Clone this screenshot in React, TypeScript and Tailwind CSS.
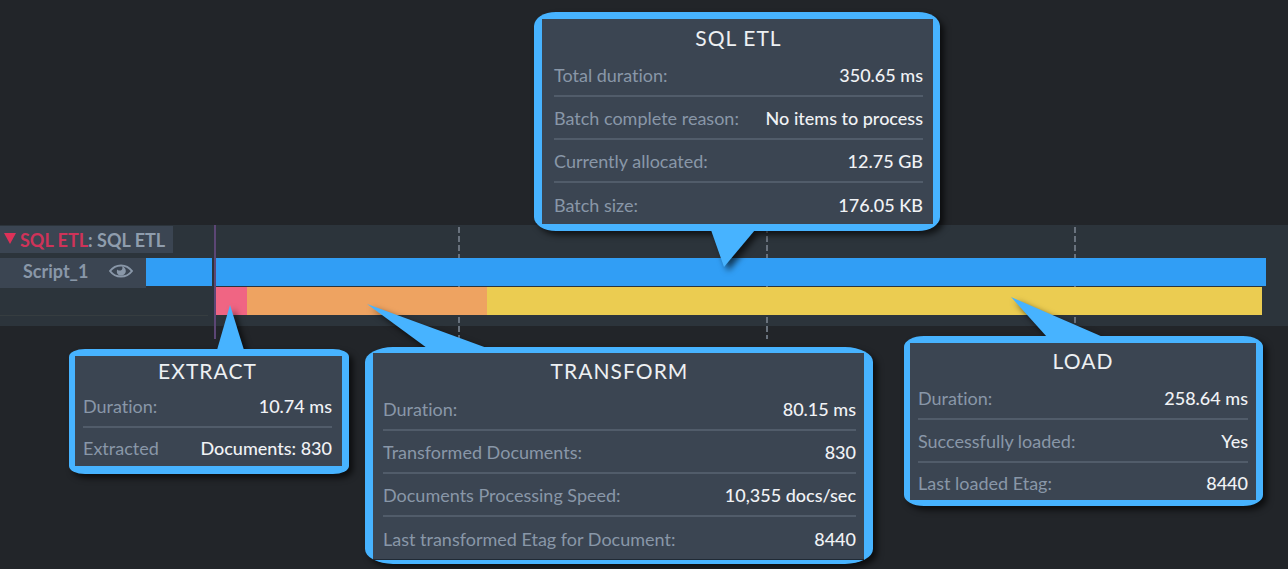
import { ReactNode } from 'react';
import clsx from 'clsx';

type Row = [string, string];

type CalloutProps = {
  title: string;
  rows: Row[];
  className: string;
  panelClass: string;
  headerClass: string;
  rowClass: string;
  lastRowClass: string;
  tail: ReactNode;
};

function Callout({ title, rows, className, panelClass, headerClass, rowClass, lastRowClass, tail }: CalloutProps) {
  return (
    <section
      className={clsx(
        'absolute bg-[#47b3ff] drop-shadow-[4px_4px_3px_rgba(0,0,0,0.65)]',
        className,
      )}
    >
      {tail}
      <div className={clsx('bg-[#3b4552]', panelClass)}>
        <h2 className={clsx('flex items-center justify-center text-[21px] leading-6 tracking-wider text-[#edf0f3]', headerClass)}>
          {title}
        </h2>
        <dl>
          {rows.map(([label, value], i) => (
            <div
              key={label}
              className={clsx(
                'flex items-center justify-between whitespace-nowrap text-lg leading-6',
                i < rows.length - 1 ? ['border-b-2 border-[#515c6a]', rowClass] : lastRowClass,
              )}
            >
              <dt className="text-[#8997a8]">{label}</dt>
              <dd className="font-medium text-[#f0f2f5]">{value}</dd>
            </div>
          ))}
        </dl>
      </div>
    </section>
  );
}

function Guide({ className }: { className: string }) {
  return (
    <div
      className={clsx(
        'absolute top-0.5 h-28 w-0.5 bg-[repeating-linear-gradient(to_bottom,#69727d_0_6px,transparent_6px_9px)]',
        className,
      )}
    />
  );
}

function EyeIcon() {
  return (
    <svg width="24" height="14" viewBox="0 0 24 14" fill="none" stroke="#8997a8" aria-hidden="true">
      <path d="M1 7C4 3 8 1.4 12 1.4S20 3 23 7c-3 4-7 5.6-11 5.6S4 11 1 7Z" strokeWidth="2" />
      <path d="M13 2.2c.9 1.6.4 3.6-1.1 4.2-1.2.5-2.6.1-3.6-1C7 8.400 8.700 11.500 12 11.500c2.700 0 4.800-2 4.800-4.600 0-2.300-1.600-4.300-3.800-4.700Z" fill="#8997a8" stroke="none" />
    </svg>
  );
}

export default function App() {
  return (
    <main className="relative min-h-screen overflow-hidden bg-[#222529] pt-[225px] font-['Lato',sans-serif] [font-variant-ligatures:none]">
      <section className="relative h-[101px] bg-[#2c343b] pt-px" aria-label="Timeline">
        <Guide className="left-[458px]" />
        <Guide className="left-[766px]" />
        <Guide className="left-[1074px]" />

        <button type="button" className="flex h-[27px] w-[173px] items-center gap-1 bg-[#3b4552] pl-1 text-lg leading-6 font-bold whitespace-nowrap text-[#8f9dad]">
          <svg width="12" height="11" viewBox="0 0 12 11" className="mb-0.5" aria-hidden="true">
            <path d="M0 0h12L6 11Z" fill="#dc3158" />
          </svg>
          <span>
            <span className="text-[#cf3359]">SQL ETL</span>: SQL ETL
          </span>
        </button>

        <div className="relative mt-[5px] flex h-7 pr-[22px]">
          <div className="flex h-[30px] w-[146px] shrink-0 items-center justify-between bg-[#3b4552] pr-[13px] pb-1 pl-[23px] text-lg leading-6 font-bold text-[#8997a8]">
            Script_1
            <button type="button" aria-label="Toggle Script_1"><EyeIcon /></button>
          </div>
          <div className="mr-1 w-[66px] shrink-0 bg-[#319ef5]" />
          <div className="grow bg-[#319ef5]" />
        </div>

        <div className="relative mt-px flex h-7 pr-[26px] pl-[215px]">
          <div className="w-8 shrink-0 bg-[#f06583]" />
          <div className="w-60 shrink-0 bg-[#eea361]" />
          <div className="grow bg-[#ebcc51]" />
        </div>
        <div className="h-px w-52 bg-[#363d40]" />
        <div className="absolute top-0 left-[214px] h-[114px] w-0.5 bg-[#5c4675]" />
      </section>

      <Callout
        title="SQL ETL"
        className="top-3 left-[534px] w-[406px] rounded-[22px/14px] py-[7px] pr-[7px] pl-2"
        panelClass="pr-2.5 pl-3"
        headerClass="h-[35px] pt-0.5"
        rowClass="h-[43px]"
        lastRowClass="h-[41px] pt-0.5"
        rows={[
          ['Total duration:', '350.65 ms'],
          ['Batch complete reason:', 'No items to process'],
          ['Currently allocated:', '12.75 GB'],
          ['Batch size:', '176.05 KB'],
        ]}
        tail={
          <svg className="absolute top-[218px] left-[177px]" width="44" height="37" viewBox="0 0 44 37" aria-hidden="true">
            <path d="M0 0h44L13 37Z" fill="#47b3ff" />
          </svg>
        }
      />

      <Callout
        title="EXTRACT"
        className="top-[349px] left-[69px] w-[280px] rounded-[16px/8px] pt-[7px] pr-[7px] pb-2 pl-1.5"
        panelClass="pr-2.5 pl-2"
        headerClass="h-[30px]"
        rowClass="h-[42px]"
        lastRowClass="h-[38px] pt-0.5"
        rows={[
          ['Duration:', '10.74 ms'],
          ['Extracted', 'Documents: 830'],
        ]}
        tail={
          <svg className="absolute -top-11 left-[148px]" width="27" height="45" viewBox="0 0 27 45" aria-hidden="true">
            <path d="M0 45h27L13 0Z" fill="#47b3ff" />
          </svg>
        }
      />

      <Callout
        title="TRANSFORM"
        className="top-[347px] left-[365px] w-[508px] rounded-[28px/15px] pt-1.5 pr-[9px] pb-1 pl-2"
        panelClass="border-b border-[#202a35] pr-2 pl-2.5"
        headerClass="h-[35px]"
        rowClass="h-[43px]"
        lastRowClass="h-[42px] pt-0.5"
        rows={[
          ['Duration:', '80.15 ms'],
          ['Transformed Documents:', '830'],
          ['Documents Processing Speed:', '10,355 docs/sec'],
          ['Last transformed Etag for Document:', '8440'],
        ]}
        tail={
          <svg className="absolute -top-[43px] left-0.5" width="120" height="44" viewBox="0 0 120 44" aria-hidden="true">
            <path d="M60 44h60L0 0Z" fill="#47b3ff" />
          </svg>
        }
      />

      <Callout
        title="LOAD"
        className="top-[336px] left-[904px] w-[359px] rounded-[20px/11px] pt-[7px] pr-[7px] pb-1.5 pl-1.5"
        panelClass="px-2"
        headerClass="h-[34px] pt-0.5"
        rowClass="h-[43px]"
        lastRowClass="h-[37px] pt-0.5"
        rows={[
          ['Duration:', '258.64 ms'],
          ['Successfully loaded:', 'Yes'],
          ['Last loaded Etag:', '8440'],
        ]}
        tail={
          <svg className="absolute -top-[39px] left-[107px]" width="92" height="40" viewBox="0 0 92 40" aria-hidden="true">
            <path d="M36 40h56L0 0Z" fill="#47b3ff" />
          </svg>
        }
      />
    </main>
  );
}
